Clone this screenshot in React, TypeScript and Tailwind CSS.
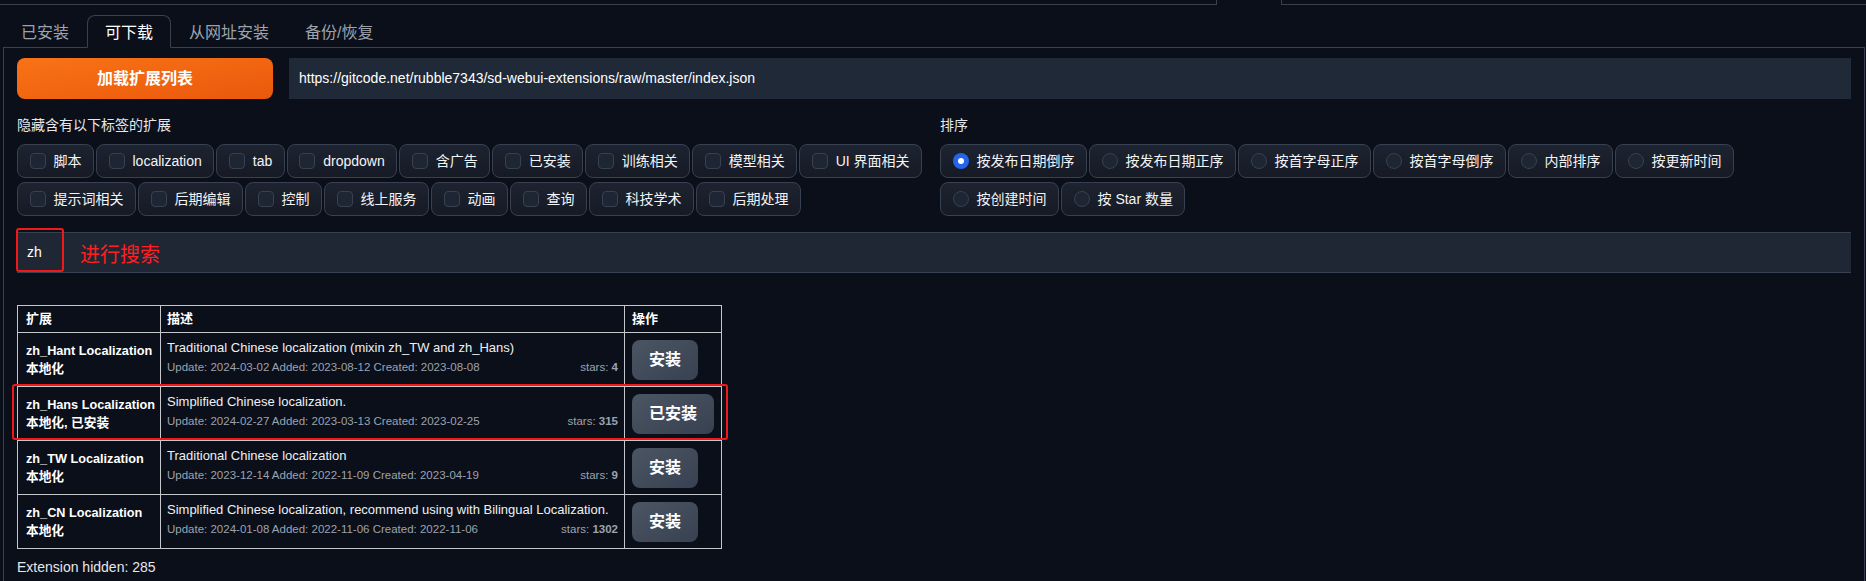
import React from 'react'

const tagRows = [
  '脚本', 'localization', 'tab', 'dropdown', '含广告', '已安装', '训练相关', '模型相关', 'UI 界面相关',
  '提示词相关', '后期编辑', '控制', '线上服务', '动画', '查询', '科技学术', '后期处理',
]

const sorts = ['按发布日期倒序', '按发布日期正序', '按首字母正序', '按首字母倒序', '内部排序', '按更新时间', '按创建时间', '按 Star 数量']

const exts = [
  {
    name: 'zh_Hant Localization',
    tags: '本地化',
    desc: 'Traditional Chinese localization (mixin zh_TW and zh_Hans)',
    meta: 'Update: 2024-03-02 Added: 2023-08-12 Created: 2023-08-08',
    stars: '4',
    action: '安装',
  },
  {
    name: 'zh_Hans Localization',
    tags: '本地化, 已安装',
    desc: 'Simplified Chinese localization.',
    meta: 'Update: 2024-02-27 Added: 2023-03-13 Created: 2023-02-25',
    stars: '315',
    action: '已安装',
  },
  {
    name: 'zh_TW Localization',
    tags: '本地化',
    desc: 'Traditional Chinese localization',
    meta: 'Update: 2023-12-14 Added: 2022-11-09 Created: 2023-04-19',
    stars: '9',
    action: '安装',
  },
  {
    name: 'zh_CN Localization',
    tags: '本地化',
    desc: 'Simplified Chinese localization, recommend using with Bilingual Localization.',
    meta: 'Update: 2024-01-08 Added: 2022-11-06 Created: 2022-11-06',
    stars: '1302',
    action: '安装',
  },
]

function Chip({ label, kind, checked }: { label: string; kind: 'box' | 'radio'; checked?: boolean }) {
  return (
    <label className="flex h-[34px] items-center gap-2 rounded-lg border border-[#374151] bg-linear-to-b from-[#1d2330] to-[#151a25] px-[11.5px] text-[14px] text-[#f3f4f6]">
      {kind === 'box' ? (
        <span className="h-4 w-4 rounded-[4px] border border-[#374151] bg-[#1f2633]" />
      ) : checked ? (
        <span className="flex h-4 w-4 items-center justify-center rounded-full bg-[#2563eb]">
          <span className="h-[6px] w-[6px] rounded-full bg-white" />
        </span>
      ) : (
        <span className="h-4 w-4 rounded-full border border-[#374151] bg-[#1f2633]" />
      )}
      <span className="whitespace-nowrap">{label}</span>
    </label>
  )
}

function Tab({ label, active }: { label: string; active?: boolean }) {
  return (
    <div
      className={
        active
          ? '-mb-px flex h-[33px] items-center rounded-t-lg border border-[#374151] border-b-[#0b0f19] bg-[#0b0f19] px-[17px] pt-[2px] text-[16px] text-white'
          : '-mb-px flex h-[33px] items-center border border-transparent px-[17px] pt-[2px] text-[16px] text-[#9ca3af]'
      }
    >
      {label}
    </div>
  )
}

export default function App() {
  return (
    <div className="h-[581px] overflow-hidden bg-[#0b0f19] font-['Liberation_Sans','Noto_Sans_CJK_SC',sans-serif] text-[#e5e7eb]">
      <div className="flex h-[5px]">
        <div className="w-[1217px] border-b border-r border-[#374151]" />
        <div className="ml-[64px] flex-1 border-b border-l border-[#374151]" />
      </div>

      <div className="pl-[3px] pr-[1px] pt-[10px]">
        <div className="flex h-[33px] border-b border-[#374151]">
          <Tab label="已安装" />
          <Tab label="可下载" active />
          <Tab label="从网址安装" />
          <Tab label="备份/恢复" />
        </div>

        <div className="h-[600px] border-x border-[#374151] px-[13px] pt-[10px]">
          <div className="flex h-[41px] gap-4">
            <button className="w-[256px] rounded-lg bg-linear-to-br from-[#f97316] to-[#ea580c] text-[16px] font-bold text-white">
              加载扩展列表
            </button>
            <div className="flex flex-1 items-center bg-[#1f2937] px-[10px] text-[14px] text-white">
              https://gitcode.net/rubble7343/sd-webui-extensions/raw/master/index.json
            </div>
          </div>

          <div className="mt-[17px] grid grid-cols-2 gap-3">
            <div>
              <div className="text-[14px] leading-[18px] text-[#e5e7eb]">隐藏含有以下标签的扩展</div>
              <div className="mt-[10px] flex flex-wrap gap-x-[2px] gap-y-[4px]">
                {tagRows.map((t) => (
                  <Chip key={t} label={t} kind="box" />
                ))}
              </div>
            </div>
            <div>
              <div className="text-[14px] leading-[18px] text-[#e5e7eb]">排序</div>
              <div className="mt-[10px] flex flex-wrap gap-x-[2px] gap-y-[4px]">
                {sorts.map((s, i) => (
                  <Chip key={s} label={s} kind="radio" checked={i === 0} />
                ))}
              </div>
            </div>
          </div>

          <div className="relative mt-[16px] flex h-[41px] items-center border-y border-[#374151] bg-[#1f2735] pl-[10px] text-[14px] text-white">
            zh
            <div className="absolute -left-px -top-[5px] h-[44px] w-[48px] rounded-[3px] border-2 border-[#f01818]" />
            <div className="absolute left-[63px] top-[12px] text-[20px] leading-none text-[#ff1f1f]">进行搜索</div>
          </div>

          <div className="relative mt-[32px] w-[704px]">
            <table className="w-[704px] table-fixed border-collapse text-[13px]">
              <colgroup>
                <col className="w-[143px]" />
                <col className="w-[464px]" />
                <col className="w-[97px]" />
              </colgroup>
              <thead>
                <tr className="h-[27px]">
                  <th className="border border-[#c4c7cc] px-[8px] text-left font-bold text-white">扩展</th>
                  <th className="border border-[#c4c7cc] px-[6px] text-left font-bold text-white">描述</th>
                  <th className="border border-[#c4c7cc] px-[7px] text-left font-bold text-white">操作</th>
                </tr>
              </thead>
              <tbody>
                {exts.map((e) => (
                  <tr key={e.name} className="h-[54px]">
                    <td className="border border-[#c4c7cc] px-[8px] align-middle text-[12.7px] font-bold leading-[18px] text-white">
                      <div className="whitespace-nowrap">{e.name}</div>
                      <div>{e.tags}</div>
                    </td>
                    <td className="border border-[#c4c7cc] px-[6px] pt-[6px] align-top">
                      <div className="whitespace-nowrap leading-[18px] text-[#eef0f3]">{e.desc}</div>
                      <div className="flex justify-between text-[11.5px] leading-[20px] text-[#9ca3af]">
                        <span>{e.meta}</span>
                        <span>
                          stars: <span className="font-semibold">{e.stars}</span>
                        </span>
                      </div>
                    </td>
                    <td className="border border-[#c4c7cc] px-[7px] align-middle">
                      <button className="h-[40px] rounded-lg bg-linear-to-br from-[#4b5563] to-[#374151] px-[17px] text-[16px] font-bold text-white">
                        {e.action}
                      </button>
                    </td>
                  </tr>
                ))}
              </tbody>
            </table>
            <div className="pointer-events-none absolute -left-[5px] top-[79px] h-[56px] w-[716px] rounded-[3px] border-2 border-[#f01818]" />
          </div>

          <div className="mt-[9px] text-[14px] leading-[18px] text-[#e5e7eb]">Extension hidden: 285</div>
        </div>
      </div>
    </div>
  )
}
